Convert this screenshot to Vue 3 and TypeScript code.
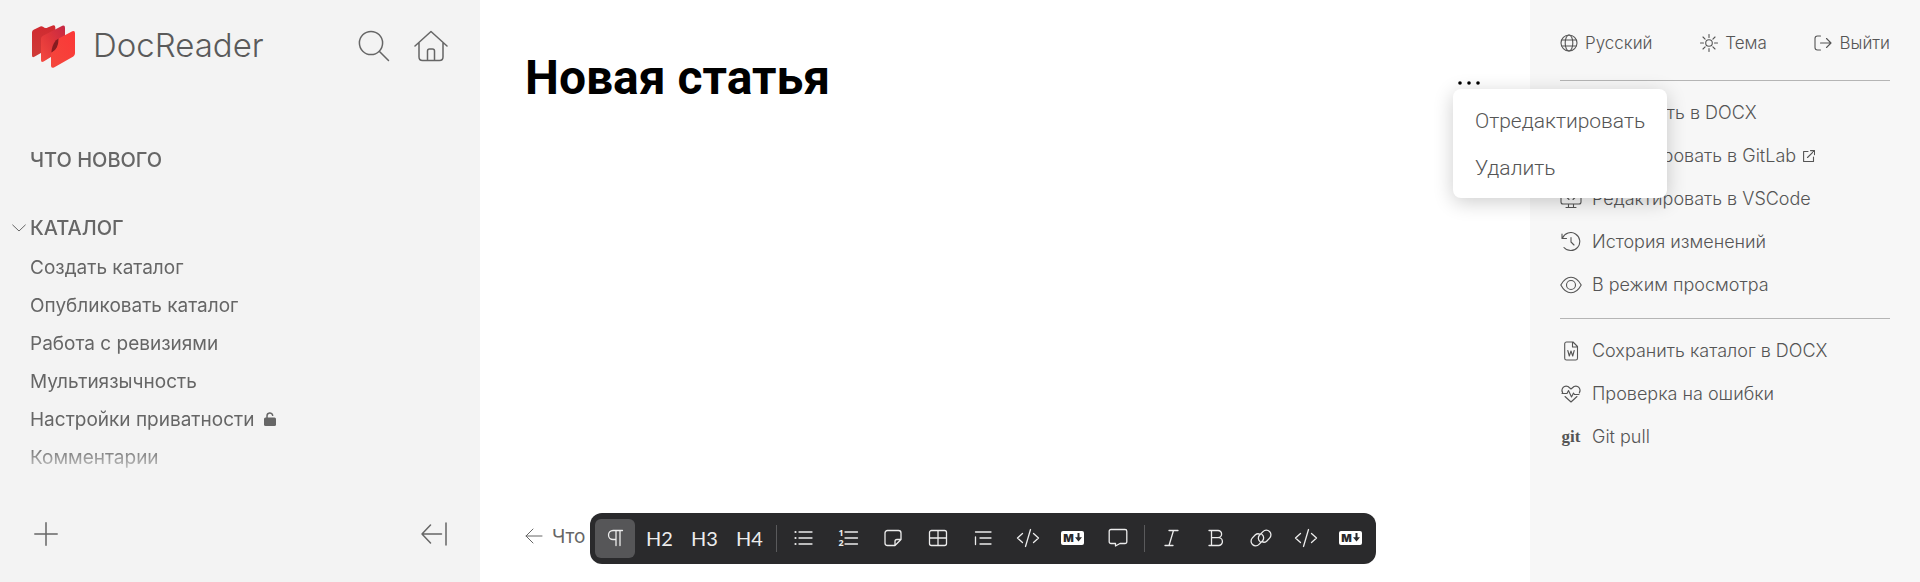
<script setup lang="ts">
import { ref } from 'vue'

interface ActionItem {
  icon: string
  label: string
  external?: boolean
}

const catalog: { label: string; unlocked?: boolean }[] = [
  { label: 'Создать каталог' },
  { label: 'Опубликовать каталог' },
  { label: 'Работа с ревизиями' },
  { label: 'Мультиязычность' },
  { label: 'Настройки приватности', unlocked: true },
  { label: 'Комментарии' },
]

const actionGroups: ActionItem[][] = [
  [
    { icon: 'doc', label: 'Сохранить в DOCX' },
    { icon: 'monitor', label: 'Редактировать в GitLab', external: true },
    { icon: 'monitor', label: 'Редактировать в VSCode' },
    { icon: 'history', label: 'История изменений' },
    { icon: 'eye', label: 'В режим просмотра' },
  ],
  [
    { icon: 'doc', label: 'Сохранить каталог в DOCX' },
    { icon: 'heart', label: 'Проверка на ошибки' },
    { icon: 'git', label: 'Git pull' },
  ],
]

const toolGroups: { id: string; title: string; text?: string }[][] = [
  [
    { id: 'paragraph', title: 'Параграф' },
    { id: 'h2', title: 'Заголовок 2', text: 'H2' },
    { id: 'h3', title: 'Заголовок 3', text: 'H3' },
    { id: 'h4', title: 'Заголовок 4', text: 'H4' },
  ],
  [
    { id: 'bullets', title: 'Маркированный список' },
    { id: 'numbers', title: 'Нумерованный список' },
    { id: 'note', title: 'Заметка' },
    { id: 'table', title: 'Таблица' },
    { id: 'indent', title: 'Вложенность' },
    { id: 'code', title: 'Блок кода' },
    { id: 'md', title: 'Блок Markdown' },
    { id: 'comment', title: 'Комментарий' },
  ],
  [
    { id: 'italic', title: 'Курсив' },
    { id: 'bold', title: 'Жирный' },
    { id: 'link', title: 'Ссылка' },
    { id: 'code', title: 'Код' },
    { id: 'md', title: 'Markdown' },
  ],
]

const activeTool = ref('paragraph')
const menuOpen = ref(true)
const catalogOpen = ref(true)
</script>

<template>
  <div class="layout">
    <aside class="sidebar">
      <header class="brand-row">
        <a href="#" class="brand">
          <svg class="logo" viewBox="96 81 129 128" aria-hidden="true">
            <defs>
              <linearGradient id="sheetBack" x1="0" y1="0" x2="0" y2="1">
                <stop offset="0" stop-color="#d02a30" />
                <stop offset="1" stop-color="#cf3b38" />
              </linearGradient>
              <linearGradient id="sheetMiddle" x1="1" y1="0" x2="0" y2="1">
                <stop offset="0" stop-color="#c42744" />
                <stop offset="0.5" stop-color="#e0363a" />
                <stop offset="1" stop-color="#f54a40" />
              </linearGradient>
              <linearGradient id="sheetFront" x1="1" y1="0" x2="0" y2="1">
                <stop offset="0" stop-color="#fb3737" />
                <stop offset="1" stop-color="#f4473c" />
              </linearGradient>
            </defs>
            <path fill="url(#sheetBack)" d="M96 103Q96 97 101 95L121 85Q125 83 129 86Q136 92 143 88L158 82Q166 80 166 88V140L103 176Q96 179 96 172Z" />
            <path fill="url(#sheetMiddle)" d="M123 122Q123 116 129 113L187 83Q195 80 195 89V150L131 190Q123 194 123 186Z" />
            <path fill="#861c20" d="M176 121L168 126Q156 140 154 163L162 160Q178 145 176 121Z" />
            <path fill="url(#sheetFront)" d="M153 168Q153 163 158 161Q176 150 176 121L217 99Q225 96 225 105V165Q225 171 220 175L162 208Q153 211 153 203Z" />
          </svg>
          <span class="brand-name">DocReader</span>
        </a>
        <div class="brand-actions">
          <button type="button" aria-label="Поиск">
            <svg width="32" height="32" viewBox="0 0 32 32"><circle cx="13" cy="13" r="11.6" /><path d="M21.5 21.5l9 9" /></svg>
          </button>
          <button type="button" aria-label="Главная">
            <svg width="34" height="32" viewBox="0 0 34 32"><path d="M1 16L17 1.5 33 16M5 13v14q0 3.500 3.500 3.500h17q3.500 0 3.500-3.500V13M13.500 30V21q0-2 2-2h3q2 0 2 2v9" /></svg>
          </button>
        </div>
      </header>

      <nav class="nav">
        <a href="#" class="nav-title">ЧТО НОВОГО</a>
        <button type="button" class="nav-title nav-toggle" :aria-expanded="catalogOpen" @click="catalogOpen = !catalogOpen">
          <svg width="14" height="8" viewBox="0 0 14 8"><path d="M.7 1L7 7l6.300-6" /></svg>
          <span>КАТАЛОГ</span>
        </button>
        <ul v-if="catalogOpen">
          <li v-for="item in catalog" :key="item.label">
            <a href="#">{{ item.label }}</a>
            <svg v-if="item.unlocked" class="lock" width="12" height="14" viewBox="0 0 12 14">
              <rect x="0" y="5.5" width="12" height="8.500" rx="1.500" />
              <path d="M3 6.500V4a2.900 2.900 0 0 1 5.700-.8" />
            </svg>
          </li>
        </ul>
      </nav>

      <footer class="sidebar-footer">
        <button type="button" aria-label="Добавить">
          <svg width="24" height="24" viewBox="0 0 24 24"><path d="M12 .8v22.400M.8 12h22.400" /></svg>
        </button>
        <button type="button" aria-label="Свернуть">
          <svg width="26" height="24" viewBox="0 0 26 24"><path d="M9.500 3L1 12l8.500 9M1 12h19.500M25 1v22" /></svg>
        </button>
      </footer>
    </aside>

    <main class="main">
      <article class="article">
        <h1>Новая статья</h1>
        <a href="#" class="previous">
          <svg width="18" height="16" viewBox="0 0 18 16"><path d="M8 1L1 8l7 7M1 8h16" /></svg>
          <span>Что нового</span>
        </a>

        <div class="toolbar" role="toolbar" aria-label="Форматирование">
          <div v-for="(group, index) in toolGroups" :key="index" class="tool-group">
            <button
              v-for="tool in group"
              :key="tool.id"
              type="button"
              :aria-label="tool.title"
              :class="{ active: activeTool === tool.id }"
              @click="activeTool = tool.id"
            >
              <span v-if="tool.text">{{ tool.text }}</span>
              <span v-else-if="tool.id === 'md'" class="md-badge">
                M<svg width="7" height="9" viewBox="0 0 7 9"><path d="M3.500 0v5" /><path class="head" d="M0 4.300h7L3.500 8.500z" /></svg>
              </span>
              <svg v-else width="24" height="20" viewBox="0 0 24 20">
                <path v-if="tool.id === 'paragraph'" d="M19.500 2.500H10a4.500 4.500 0 0 0 0 9h3M13 2.500v15M17 2.500v15" />
                <g v-else-if="tool.id === 'bullets'">
                  <path d="M8 4h13M8 10h13M8 16h13" />
                  <path class="dots" d="M4.500 4h.01M4.500 10h.01M4.500 16h.01" />
                </g>
                <g v-else-if="tool.id === 'numbers'">
                  <path d="M9 4h12.500M9 10h12.500M9 16h12.500" />
                  <text x="2.500" y="8">1</text>
                  <text x="2.500" y="18">2</text>
                </g>
                <path v-else-if="tool.id === 'note'" d="M14 17.500H6.500a2.500 2.500 0 0 1-2.500-2.500V5a2.500 2.500 0 0 1 2.500-2.500h11A2.500 2.500 0 0 1 20 5v6.500zM14 17.500v-4q0-2 2-2h4" />
                <path v-else-if="tool.id === 'table'" d="M5.500 2.500h13a2 2 0 0 1 2 2v11a2 2 0 0 1-2 2h-13a2 2 0 0 1-2-2v-11a2 2 0 0 1 2-2zM12 2.500v15M3.500 10h17" />
                <path v-else-if="tool.id === 'indent'" d="M4.500 4H20M9 10h11M9 16h11M4.500 9v7.500" />
                <path v-else-if="tool.id === 'code'" d="M6.500 5.500L1.500 10l5 4.500M17.500 5.500l5 4.500-5 4.500M14.500 1.500l-5 17" />
                <path v-else-if="tool.id === 'comment'" d="M5 1.500h14a1.800 1.800 0 0 1 1.800 1.800v10.400a1.800 1.800 0 0 1-1.800 1.800h-5L9.500 18v-2.500H5a1.800 1.800 0 0 1-1.800-1.800V3.300A1.800 1.800 0 0 1 5 1.500z" />
                <path v-else-if="tool.id === 'italic'" d="M10 2.500h9M6 17.500h8M14.500 2.500l-4.500 15" />
                <path v-else-if="tool.id === 'bold'" d="M5 2.500h9a3.600 3.600 0 0 1 0 7.200H7.500M14 9.700a3.900 3.900 0 0 1 1 7.800H5M7.500 2.500v15" />
                <path v-else-if="tool.id === 'link'" d="M11 13.500a4.300 4.300 0 0 1-.6-6.200l3.600-3.700a4.600 4.600 0 0 1 6.600 6.500l-3 3.100Q15.500 15 13 13.700M13 6.500a4.300 4.300 0 0 1 .6 6.200L10 16.400a4.600 4.600 0 0 1-6.600-6.500l3-3.100Q8.500 5 11 6.300" />
              </svg>
            </button>
          </div>
        </div>
      </article>

      <div class="article-actions">
        <button type="button" class="more" aria-label="Действия" :aria-expanded="menuOpen" @click="menuOpen = !menuOpen">
          <svg width="24" height="4" viewBox="0 0 24 4"><circle cx="3" cy="2" r="1.800" /><circle cx="12" cy="2" r="1.800" /><circle cx="21" cy="2" r="1.800" /></svg>
        </button>
        <div v-if="menuOpen" class="menu" role="menu">
          <button type="button" role="menuitem">Отредактировать</button>
          <button type="button" role="menuitem">Удалить</button>
        </div>
      </div>
    </main>

    <aside class="panel">
      <div class="panel-top">
        <button type="button">
          <svg width="18" height="18" viewBox="0 0 18 18"><circle cx="9" cy="9" r="8" /><ellipse cx="9" cy="9" rx="3.800" ry="8" /><path d="M2 6h14M2 12h14" /></svg>
          Русский
        </button>
        <button type="button">
          <svg width="18" height="18" viewBox="0 0 18 18"><circle cx="9" cy="9" r="3.300" /><path d="M9 .5v3M9 14.500v3M.5 9h3M14.500 9h3M3 3l2.100 2.100M12.900 12.900L15 15M3 15l2.100-2.100M12.900 5.100L15 3" /></svg>
          Тема
        </button>
        <button type="button">
          <svg width="18" height="18" viewBox="0 0 18 18"><path d="M6.500 2H3.500Q1 2 1 4.500v9Q1 16 3.500 16h3M6.500 9H17M12.500 4.500L17 9l-4.500 4.500" /></svg>
          Выйти
        </button>
      </div>
      <ul v-for="(group, index) in actionGroups" :key="index" class="panel-group">
        <li v-for="item in group" :key="item.label">
          <a href="#">
            <span v-if="item.icon === 'git'" class="git-mark" aria-hidden="true">git</span>
            <svg v-else width="22" height="20" viewBox="0 0 22 20" aria-hidden="true">
              <g v-if="item.icon === 'doc'">
                <path d="M6.500 1H13l4.500 4.500v11.700a1.800 1.800 0 0 1-1.800 1.800H6.500a1.800 1.800 0 0 1-1.800-1.800V2.800A1.800 1.800 0 0 1 6.500 1zM12.500 1v5h5" />
                <path d="M7.800 9.500l1.500 5.500L11 10l1.700 5 1.500-5.500" />
              </g>
              <path v-else-if="item.icon === 'monitor'" d="M3 2h16a2 2 0 0 1 2 2v9a2 2 0 0 1-2 2H3a2 2 0 0 1-2-2V4a2 2 0 0 1 2-2zM8.500 15v3.500M13.500 15v3.500M6 18.500h10M9 6.500L7 8.500l2 2M13 6.500l2 2-2 2" />
              <path v-else-if="item.icon === 'history'" d="M2 2v4.500h4.500M2.500 6A9 9 0 1 1 4 15.500M11 5.500V10l3 3" />
              <g v-else-if="item.icon === 'eye'">
                <path d="M.8 10Q5 2.200 11 2.200T21.200 10Q17 17.800 11 17.800T.8 10z" />
                <circle cx="11" cy="10" r="4.500" />
              </g>
              <g v-else>
                <path d="M2.700 9Q1 6 3 3.500 5 1.500 8 2.500L11 5l3-2.500q3-1 5 1 2 2.500.3 5.500M5 12.500l6 5.500 6-5.500" />
                <path d="M2 9.500h5l1.500-3 3 6.500L13.500 9l1 1.500H19" />
              </g>
            </svg>
            <span>{{ item.label }}</span>
            <svg v-if="item.external" class="external" width="12" height="12" viewBox="0 0 12 12"><path d="M5 1.500H.6v10h9.900V7M7.500.6h4v4M11.500.6L4.500 7.500" /></svg>
          </a>
        </li>
      </ul>
    </aside>
  </div>
</template>

<style>
body {
  margin: 0;
}
</style>

<style scoped>
.layout {
  display: grid;
  grid-template-columns: 480px minmax(0, 1fr) 390px;
  min-height: 100vh;
  font-family: Inter, 'Noto Sans', sans-serif;
  font-size: 19px;
  color: #666;
  background: #fff;
}

button {
  display: flex;
  align-items: center;
  padding: 0;
  border: 0;
  background: none;
  color: inherit;
  font: inherit;
  cursor: pointer;
}

a {
  color: inherit;
  text-decoration: none;
}

ul {
  margin: 0;
  padding: 0;
  list-style: none;
}

svg {
  flex: none;
  fill: none;
  stroke: currentColor;
  stroke-width: 1.5;
  stroke-linecap: round;
  stroke-linejoin: round;
}

.sidebar {
  display: flex;
  flex-direction: column;
  background: #f3f3f3;
}

.brand-row {
  display: flex;
  align-items: center;
  justify-content: space-between;
  height: 92px;
  padding: 0 32px;
}

.brand {
  display: flex;
  align-items: center;
  gap: 18px;
}

.logo {
  width: 43px;
  height: 43px;
  stroke: none;
}

.brand-name {
  padding-bottom: 3px;
  font-size: 33px;
  font-weight: 300;
  line-height: 44px;
  color: #5a5a5a;
}

.brand-actions {
  display: flex;
  gap: 24px;
}

.nav {
  padding: 49px 30px 5px;
  -webkit-mask-image: linear-gradient(#000 calc(100% - 36px), transparent);
  mask-image: linear-gradient(#000 calc(100% - 36px), transparent);
}

.nav-title {
  display: flex;
  align-items: center;
  height: 38px;
  font-size: 20px;
  font-weight: 500;
}

.nav-toggle {
  gap: 4px;
  margin: 30px 0 1px -18px;
}

.nav-toggle svg {
  stroke-width: 1;
}

.nav li {
  display: flex;
  align-items: center;
  gap: 10px;
  height: 38px;
}

.lock rect {
  fill: currentColor;
  stroke: none;
}

.sidebar-footer {
  display: flex;
  align-items: center;
  justify-content: space-between;
  height: 96px;
  margin-top: auto;
  padding: 0 33px 0 34px;
}

.main {
  position: relative;
  z-index: 1;
  display: grid;
  grid-template-columns: minmax(0, 1fr) 45px;
  padding: 0 45px;
}

.article {
  position: relative;
  display: flex;
  flex-direction: column;
  justify-content: space-between;
}

h1 {
  margin: 48px 0 0;
  font-family: Roboto, sans-serif;
  font-size: 48px;
  font-weight: 700;
  line-height: 60px;
  color: #000;
}

.previous {
  display: flex;
  align-items: center;
  gap: 9px;
  height: 92px;
}

.previous svg {
  stroke-width: 1;
}

.toolbar {
  position: absolute;
  bottom: 18px;
  left: 50%;
  display: flex;
  padding: 6px 5px;
  border-radius: 12px;
  background: #2a2a2c;
  color: #ececec;
  font-family: Lato, sans-serif;
  font-size: 20px;
  transform: translateX(-50%);
}

.tool-group {
  display: flex;
  gap: 5px;
}

.tool-group + .tool-group::before {
  content: '';
  width: 1px;
  height: 27px;
  margin: 6px 1px 6px 6px;
  background: #5a5a5c;
}

.toolbar button {
  box-sizing: border-box;
  justify-content: center;
  width: 40px;
  height: 39px;
  padding-bottom: 2px;
  border-radius: 6px;
}

.toolbar button.active {
  background: #565658;
}

.toolbar svg {
  stroke-width: 1.3;
}

.toolbar .dots {
  stroke-width: 2.2;
}

.toolbar text {
  fill: currentColor;
  stroke: none;
  font: 700 9px 'Noto Sans', sans-serif;
}

.toolbar .md-badge {
  display: flex;
  align-items: center;
  justify-content: center;
  gap: 1px;
  width: 23px;
  height: 14px;
  border-radius: 2px;
  background: #fff;
  color: #2a2a2c;
  font: 900 11px/14px Inter, sans-serif;
}

.toolbar .md-badge svg {
  stroke-width: 2;
}

.md-badge .head {
  fill: currentColor;
  stroke: none;
}

.article-actions {
  position: relative;
  justify-self: end;
  width: 32px;
  padding-top: 76px;
}

.more {
  justify-content: center;
  width: 32px;
  height: 13px;
  color: #000;
}

.more svg {
  fill: currentColor;
  stroke: none;
}

.menu {
  position: absolute;
  top: 89px;
  left: 0;
  padding: 8px 22px 7px;
  border-radius: 8px;
  background: #fff;
  box-shadow: 0 4px 20px rgba(0, 0, 0, 0.2);
  font-family: Roboto, sans-serif;
  font-size: 21px;
  font-weight: 300;
  color: #555;
}

.menu button {
  height: 47px;
}

.panel {
  padding: 0 30px;
  background: #f7f7f7;
  font-weight: 300;
  color: #555;
}

.panel-top {
  display: flex;
  align-items: center;
  justify-content: space-between;
  height: 80px;
  padding-top: 6px;
  box-sizing: border-box;
  font-size: 17px;
}

.panel-top button {
  gap: 7px;
}

.panel svg {
  stroke-width: 1.1;
}

.panel-group {
  padding: 10px 0 12px;
  border-top: 1px solid #b5b5b5;
  font-size: 18px;
}

.panel-group a {
  display: flex;
  align-items: center;
  gap: 10px;
  height: 43px;
}

.panel-group .external {
  margin-left: -3px;
}

.git-mark {
  width: 22px;
  text-align: center;
  font-family: 'Liberation Serif', serif;
  font-size: 17px;
  font-weight: 700;
}
</style>
